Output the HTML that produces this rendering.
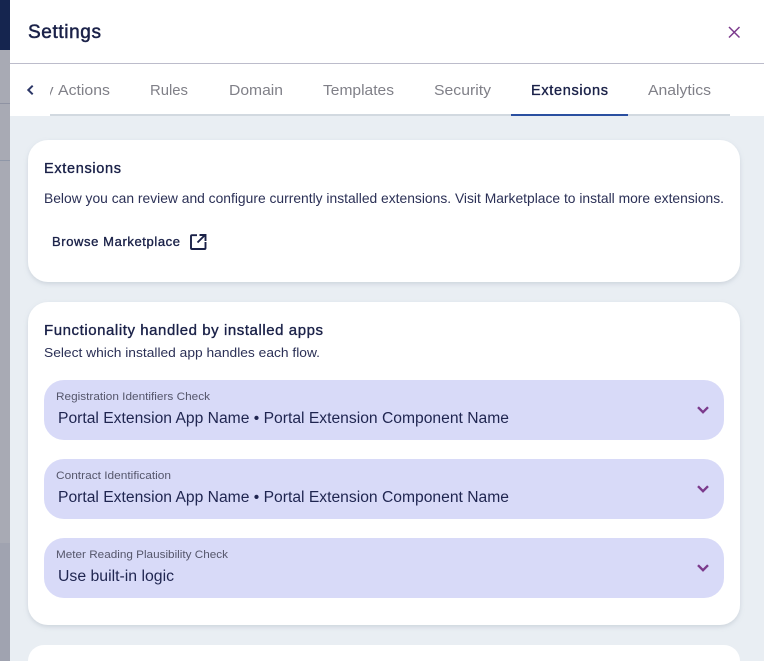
<!DOCTYPE html>
<html><head><meta charset="utf-8"><style>
html,body{margin:0;padding:0;background:#fff;width:764px;height:661px;overflow:hidden}
svg{display:block}
text{font-family:"Liberation Sans",sans-serif;fill:#1a2148}
.tab{font-size:15px;fill:#808088}
.sb{stroke:#1a2148;stroke-width:.35px}
.lab{font-size:11px;fill:#55566b}
.val{font-size:15.5px;fill:#1f2550}
</style></head><body>
<svg width="764" height="661" viewBox="0 0 764 661" xmlns="http://www.w3.org/2000/svg">
<defs>
<filter id="s" x="-5%" y="-10%" width="110%" height="120%"><feDropShadow dx="0" dy="2" stdDeviation="2.5" flood-color="#8a96a8" flood-opacity=".3"/></filter>
<clipPath id="c"><rect x="50" y="70" width="30" height="40"/></clipPath>
</defs>
<rect x="0" y="50" width="10" height="493" fill="#a8aab4"/>
<rect x="0" y="543" width="10" height="118" fill="#a0a3b0"/>
<rect x="0" y="0" width="10" height="50" fill="#15254f"/>
<rect x="0" y="103" width="10" height="1" fill="#8f93a3"/>
<rect x="0" y="160" width="10" height="1" fill="#8f97a8"/>
<rect x="10" y="0" width="754" height="661" fill="#fff"/>
<rect x="10" y="116" width="754" height="545" fill="#e9eef3"/>
<rect x="10" y="63" width="754" height="1" fill="#bcbccb"/>

<text class="sb" x="28" y="38" font-size="19" style="stroke-width:.5px" textLength="73" lengthAdjust="spacing">Settings</text>
<path d="M729 27l10.500 10.500M739.500 27l-10.500 10.500" stroke="#7b3a8c" stroke-width="1.500" fill="none"/>

<path d="M32.700 85.700L28.300 90l4.400 4.300" stroke="#2c3767" stroke-width="2" fill="none"/>
<rect x="50" y="114" width="680" height="2" fill="#d2d9e0"/>
<rect x="511" y="114" width="117" height="2" fill="#2a4fa0"/>
<text class="tab" x="46" y="95" clip-path="url(#c)">y</text>
<text class="tab" x="58" y="95" textLength="52" lengthAdjust="spacingAndGlyphs">Actions</text>
<text class="tab" x="150" y="95" textLength="38" lengthAdjust="spacingAndGlyphs">Rules</text>
<text class="tab" x="229" y="95" textLength="54" lengthAdjust="spacingAndGlyphs">Domain</text>
<text class="tab" x="323" y="95" textLength="71" lengthAdjust="spacingAndGlyphs">Templates</text>
<text class="tab" x="434" y="95" textLength="57" lengthAdjust="spacingAndGlyphs">Security</text>
<text class="sb" x="531" y="95" font-size="14.500" textLength="77" lengthAdjust="spacing">Extensions</text>
<text class="tab" x="648" y="95" textLength="63" lengthAdjust="spacingAndGlyphs">Analytics</text>

<rect x="28" y="140" width="712" height="142" rx="20" fill="#fff" filter="url(#s)"/>
<text class="sb" x="44" y="173" font-size="14.500" textLength="77" lengthAdjust="spacing">Extensions</text>
<text x="44" y="203" font-size="14" style="fill:#2b3056" textLength="680" lengthAdjust="spacingAndGlyphs">Below you can review and configure currently installed extensions. Visit Marketplace to install more extensions.</text>
<text class="sb" x="52" y="246" font-size="13" textLength="128" lengthAdjust="spacing">Browse Marketplace</text>
<path d="M197 235.200h-5a1 1 0 0 0-1 1v11.800a1 1 0 0 0 1 1h12.500a1 1 0 0 0 1-1v-6M197.500 242.500l7.500-7.500M199.500 235h6v6" stroke="#1a2148" stroke-width="1.900" fill="none"/>

<rect x="28" y="302" width="712" height="323" rx="20" fill="#fff" filter="url(#s)"/>
<text class="sb" x="44" y="335" font-size="15" textLength="279" lengthAdjust="spacing">Functionality handled by installed apps</text>
<text x="44" y="357" font-size="12.500" style="fill:#2b3056" textLength="276" lengthAdjust="spacingAndGlyphs">Select which installed app handles each flow.</text>

<rect x="44" y="380" width="680" height="60" rx="20" fill="#d8daf8"/>
<text class="lab" x="56" y="400" textLength="154" lengthAdjust="spacingAndGlyphs">Registration Identifiers Check</text>
<text class="val" x="58" y="423" textLength="451" lengthAdjust="spacingAndGlyphs">Portal Extension App Name • Portal Extension Component Name</text>
<path d="M698 407.200l5 5 5-5" stroke="#7b3a8c" stroke-width="2.400" fill="none"/>

<rect x="44" y="459" width="680" height="60" rx="20" fill="#d8daf8"/>
<text class="lab" x="56" y="479" textLength="115" lengthAdjust="spacingAndGlyphs">Contract Identification</text>
<text class="val" x="58" y="502" textLength="451" lengthAdjust="spacingAndGlyphs">Portal Extension App Name • Portal Extension Component Name</text>
<path d="M698 486.200l5 5 5-5" stroke="#7b3a8c" stroke-width="2.400" fill="none"/>

<rect x="44" y="538" width="680" height="60" rx="20" fill="#d8daf8"/>
<text class="lab" x="56" y="558" textLength="172" lengthAdjust="spacingAndGlyphs">Meter Reading Plausibility Check</text>
<text class="val" x="58" y="581" textLength="116" lengthAdjust="spacingAndGlyphs">Use built-in logic</text>
<path d="M698 565.200l5 5 5-5" stroke="#7b3a8c" stroke-width="2.400" fill="none"/>

<path d="M28 661v0a16 16 0 0 1 16-16h680a16 16 0 0 1 16 16z" fill="#fff"/>
</svg>
</body></html>
